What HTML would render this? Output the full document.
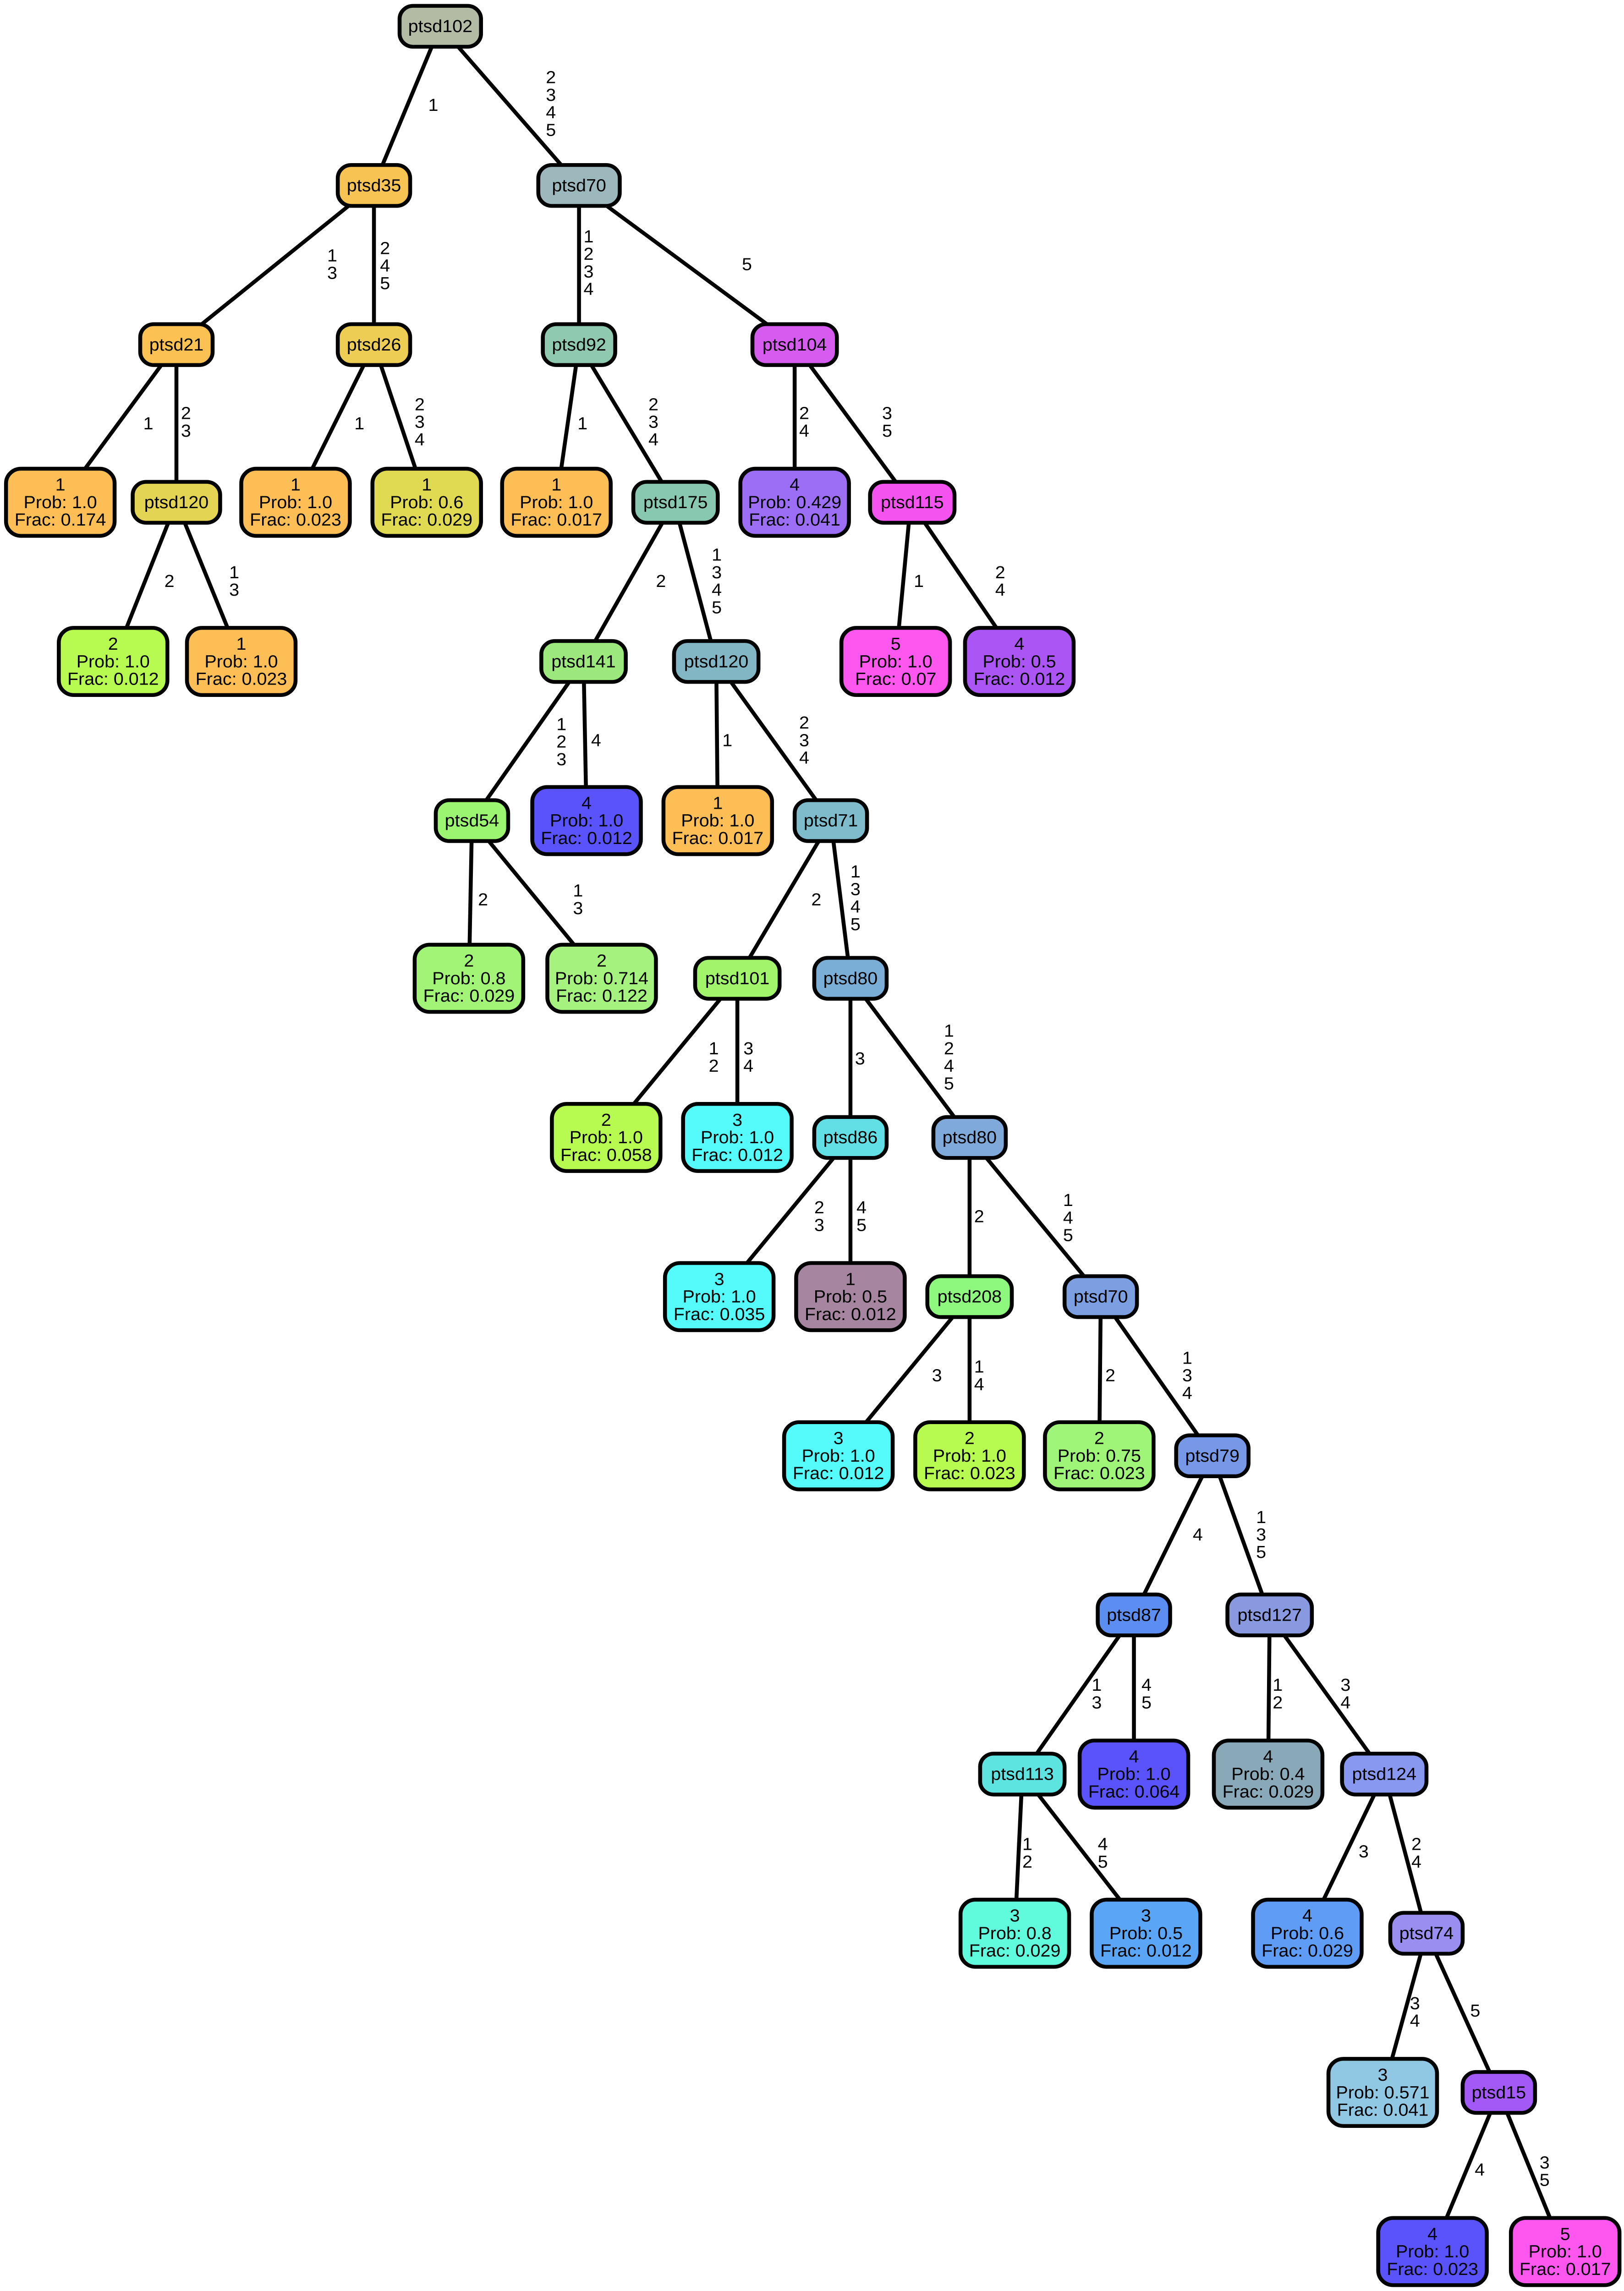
<!DOCTYPE html>
<html><head><meta charset="utf-8"><style>
html,body{margin:0;padding:0;background:#fff;overflow:hidden;width:100%;height:100%;}
svg{position:absolute;left:0;top:0;width:100vw;height:100vh;display:block;}
text{font-family:"Liberation Sans",Arial,sans-serif;font-size:12px;fill:#000;}
.n{stroke:#000;stroke-width:2.6;}
.e{stroke:#000;stroke-width:2.6;}
</style></head><body>
<svg viewBox="0 0 1077 1569" preserveAspectRatio="none" xmlns="http://www.w3.org/2000/svg">
<rect width="1077" height="1569" fill="#fff"/>
<g class="e">
<line x1="292" y1="18" x2="248" y2="127"/><line x1="292" y1="18" x2="384" y2="127"/>
<line x1="248" y1="127" x2="117" y2="236"/><line x1="248" y1="127" x2="248" y2="236"/>
<line x1="117" y1="236" x2="40" y2="344"/><line x1="117" y1="236" x2="117" y2="344"/>
<line x1="117" y1="344" x2="75" y2="453"/><line x1="117" y1="344" x2="160" y2="453"/>
<line x1="248" y1="236" x2="196" y2="344"/><line x1="248" y1="236" x2="283" y2="344"/>
<line x1="384" y1="127" x2="384" y2="236"/><line x1="384" y1="127" x2="527" y2="236"/>
<line x1="384" y1="236" x2="369" y2="344"/><line x1="384" y1="236" x2="447" y2="344"/>
<line x1="527" y1="236" x2="527" y2="344"/><line x1="527" y1="236" x2="604" y2="344"/>
<line x1="447" y1="344" x2="387" y2="453"/><line x1="447" y1="344" x2="475" y2="453"/>
<line x1="604" y1="344" x2="594" y2="453"/><line x1="604" y1="344" x2="676" y2="453"/>
<line x1="387" y1="453" x2="313" y2="562"/><line x1="387" y1="453" x2="389" y2="562"/>
<line x1="475" y1="453" x2="476" y2="562"/><line x1="475" y1="453" x2="551" y2="562"/>
<line x1="313" y1="562" x2="311" y2="670"/><line x1="313" y1="562" x2="399" y2="670"/>
<line x1="551" y1="562" x2="489" y2="670"/><line x1="551" y1="562" x2="564" y2="670"/>
<line x1="489" y1="670" x2="402" y2="779"/><line x1="489" y1="670" x2="489" y2="779"/>
<line x1="564" y1="670" x2="564" y2="779"/><line x1="564" y1="670" x2="643" y2="779"/>
<line x1="564" y1="779" x2="477" y2="888"/><line x1="564" y1="779" x2="564" y2="888"/>
<line x1="643" y1="779" x2="643" y2="888"/><line x1="643" y1="779" x2="730" y2="888"/>
<line x1="643" y1="888" x2="556" y2="997"/><line x1="643" y1="888" x2="643" y2="997"/>
<line x1="730" y1="888" x2="729" y2="997"/><line x1="730" y1="888" x2="804" y2="997"/>
<line x1="804" y1="997" x2="752" y2="1106"/><line x1="804" y1="997" x2="842" y2="1106"/>
<line x1="752" y1="1106" x2="678" y2="1215"/><line x1="752" y1="1106" x2="752" y2="1215"/>
<line x1="842" y1="1106" x2="841" y2="1215"/><line x1="842" y1="1106" x2="918" y2="1215"/>
<line x1="678" y1="1215" x2="673" y2="1324"/><line x1="678" y1="1215" x2="760" y2="1324"/>
<line x1="918" y1="1215" x2="867" y2="1324"/><line x1="918" y1="1215" x2="946" y2="1324"/>
<line x1="946" y1="1324" x2="917" y2="1433"/><line x1="946" y1="1324" x2="994" y2="1433"/>
<line x1="994" y1="1433" x2="950" y2="1542"/><line x1="994" y1="1433" x2="1037" y2="1542"/>
</g>
<g>
<text x="284" y="76">1</text>
<text x="362" y="57">2<tspan x="362" dy="12">3</tspan><tspan x="362" dy="12">4</tspan><tspan x="362" dy="12">5</tspan></text>
<text x="217" y="179">1<tspan x="217" dy="12">3</tspan></text>
<text x="252" y="174">2<tspan x="252" dy="12">4</tspan><tspan x="252" dy="12">5</tspan></text>
<text x="95" y="294">1</text>
<text x="120" y="287">2<tspan x="120" dy="12">3</tspan></text>
<text x="109" y="402">2</text>
<text x="152" y="396">1<tspan x="152" dy="12">3</tspan></text>
<text x="235" y="294">1</text>
<text x="275" y="281">2<tspan x="275" dy="12">3</tspan><tspan x="275" dy="12">4</tspan></text>
<text x="387" y="166">1<tspan x="387" dy="12">2</tspan><tspan x="387" dy="12">3</tspan><tspan x="387" dy="12">4</tspan></text>
<text x="492" y="185">5</text>
<text x="383" y="294">1</text>
<text x="430" y="281">2<tspan x="430" dy="12">3</tspan><tspan x="430" dy="12">4</tspan></text>
<text x="530" y="287">2<tspan x="530" dy="12">4</tspan></text>
<text x="585" y="287">3<tspan x="585" dy="12">5</tspan></text>
<text x="435" y="402">2</text>
<text x="472" y="384">1<tspan x="472" dy="12">3</tspan><tspan x="472" dy="12">4</tspan><tspan x="472" dy="12">5</tspan></text>
<text x="606" y="402">1</text>
<text x="660" y="396">2<tspan x="660" dy="12">4</tspan></text>
<text x="369" y="500">1<tspan x="369" dy="12">2</tspan><tspan x="369" dy="12">3</tspan></text>
<text x="392" y="511">4</text>
<text x="479" y="511">1</text>
<text x="530" y="499">2<tspan x="530" dy="12">3</tspan><tspan x="530" dy="12">4</tspan></text>
<text x="317" y="620">2</text>
<text x="380" y="614">1<tspan x="380" dy="12">3</tspan></text>
<text x="538" y="620">2</text>
<text x="564" y="601">1<tspan x="564" dy="12">3</tspan><tspan x="564" dy="12">4</tspan><tspan x="564" dy="12">5</tspan></text>
<text x="470" y="722">1<tspan x="470" dy="12">2</tspan></text>
<text x="493" y="722">3<tspan x="493" dy="12">4</tspan></text>
<text x="567" y="729">3</text>
<text x="626" y="710">1<tspan x="626" dy="12">2</tspan><tspan x="626" dy="12">4</tspan><tspan x="626" dy="12">5</tspan></text>
<text x="540" y="831">2<tspan x="540" dy="12">3</tspan></text>
<text x="568" y="831">4<tspan x="568" dy="12">5</tspan></text>
<text x="646" y="837">2</text>
<text x="705" y="826">1<tspan x="705" dy="12">4</tspan><tspan x="705" dy="12">5</tspan></text>
<text x="618" y="946">3</text>
<text x="646" y="940">1<tspan x="646" dy="12">4</tspan></text>
<text x="733" y="946">2</text>
<text x="784" y="934">1<tspan x="784" dy="12">3</tspan><tspan x="784" dy="12">4</tspan></text>
<text x="791" y="1055">4</text>
<text x="833" y="1043">1<tspan x="833" dy="12">3</tspan><tspan x="833" dy="12">5</tspan></text>
<text x="724" y="1158">1<tspan x="724" dy="12">3</tspan></text>
<text x="757" y="1158">4<tspan x="757" dy="12">5</tspan></text>
<text x="844" y="1158">1<tspan x="844" dy="12">2</tspan></text>
<text x="889" y="1158">3<tspan x="889" dy="12">4</tspan></text>
<text x="678" y="1267">1<tspan x="678" dy="12">2</tspan></text>
<text x="728" y="1267">4<tspan x="728" dy="12">5</tspan></text>
<text x="901" y="1272">3</text>
<text x="936" y="1267">2<tspan x="936" dy="12">4</tspan></text>
<text x="935" y="1376">3<tspan x="935" dy="12">4</tspan></text>
<text x="975" y="1381">5</text>
<text x="978" y="1490">4</text>
<text x="1021" y="1485">3<tspan x="1021" dy="12">5</tspan></text>
</g>
<g class="n">
<rect x="265" y="4" width="54" height="28" rx="9" fill="#b3bba4"/>
<rect x="224" y="113" width="48" height="28" rx="9" fill="#f7c352"/>
<rect x="357" y="113" width="54" height="28" rx="9" fill="#9db8bc"/>
<rect x="93" y="222" width="48" height="28" rx="9" fill="#fbc153"/>
<rect x="224" y="222" width="48" height="28" rx="9" fill="#edcd53"/>
<rect x="360" y="222" width="48" height="28" rx="9" fill="#8fc9b0"/>
<rect x="499" y="222" width="56" height="28" rx="9" fill="#d65cf0"/>
<rect x="88" y="330" width="58" height="28" rx="9" fill="#e3d553"/>
<rect x="420" y="330" width="56" height="28" rx="9" fill="#88c8b0"/>
<rect x="577" y="330" width="56" height="28" rx="9" fill="#f553f0"/>
<rect x="359" y="439" width="56" height="28" rx="9" fill="#9de87c"/>
<rect x="447" y="439" width="56" height="28" rx="9" fill="#83b6c4"/>
<rect x="289" y="548" width="48" height="28" rx="9" fill="#9cf570"/>
<rect x="527" y="548" width="48" height="28" rx="9" fill="#7fbccb"/>
<rect x="461" y="656" width="56" height="28" rx="9" fill="#a2f56a"/>
<rect x="540" y="656" width="48" height="28" rx="9" fill="#7aaed6"/>
<rect x="540" y="765" width="48" height="28" rx="9" fill="#62dfe4"/>
<rect x="619" y="765" width="48" height="28" rx="9" fill="#7fa9d9"/>
<rect x="615" y="874" width="56" height="28" rx="9" fill="#8ef77e"/>
<rect x="706" y="874" width="48" height="28" rx="9" fill="#7b9fe0"/>
<rect x="780" y="983" width="48" height="28" rx="9" fill="#7698e6"/>
<rect x="728" y="1092" width="48" height="28" rx="9" fill="#5b8ef0"/>
<rect x="814" y="1092" width="56" height="28" rx="9" fill="#8899e0"/>
<rect x="650" y="1201" width="56" height="28" rx="9" fill="#5de3e0"/>
<rect x="890" y="1201" width="56" height="28" rx="9" fill="#8898f0"/>
<rect x="922" y="1310" width="48" height="28" rx="9" fill="#9a8ef0"/>
<rect x="970" y="1419" width="48" height="28" rx="9" fill="#a259f5"/>
</g>
<g text-anchor="middle">
<text x="292" y="22">ptsd102</text><text x="248" y="131">ptsd35</text><text x="384" y="131">ptsd70</text>
<text x="117" y="240">ptsd21</text><text x="248" y="240">ptsd26</text><text x="384" y="240">ptsd92</text>
<text x="527" y="240">ptsd104</text><text x="117" y="348">ptsd120</text><text x="448" y="348">ptsd175</text>
<text x="605" y="348">ptsd115</text><text x="387" y="457">ptsd141</text><text x="475" y="457">ptsd120</text>
<text x="313" y="566">ptsd54</text><text x="551" y="566">ptsd71</text><text x="489" y="674">ptsd101</text>
<text x="564" y="674">ptsd80</text><text x="564" y="783">ptsd86</text><text x="643" y="783">ptsd80</text>
<text x="643" y="892">ptsd208</text><text x="730" y="892">ptsd70</text><text x="804" y="1001">ptsd79</text>
<text x="752" y="1110">ptsd87</text><text x="842" y="1110">ptsd127</text><text x="678" y="1219">ptsd113</text>
<text x="918" y="1219">ptsd124</text><text x="946" y="1328">ptsd74</text><text x="994" y="1437">ptsd15</text>
</g>
<g class="n">
<rect x="4" y="321" width="72" height="46" rx="10" fill="#fdbf55"/>
<rect x="39" y="430" width="72" height="46" rx="10" fill="#b8fb50"/>
<rect x="124" y="430" width="72" height="46" rx="10" fill="#fdbf55"/>
<rect x="160" y="321" width="72" height="46" rx="10" fill="#fdbf55"/>
<rect x="247" y="321" width="72" height="46" rx="10" fill="#e0da52"/>
<rect x="333" y="321" width="72" height="46" rx="10" fill="#fdbf55"/>
<rect x="491" y="321" width="72" height="46" rx="10" fill="#9b6ef5"/>
<rect x="558" y="430" width="72" height="46" rx="10" fill="#fd57f0"/>
<rect x="640" y="430" width="72" height="46" rx="10" fill="#ac55f5"/>
<rect x="353" y="539" width="72" height="46" rx="10" fill="#5a53fb"/>
<rect x="440" y="539" width="72" height="46" rx="10" fill="#fdbf55"/>
<rect x="275" y="647" width="72" height="46" rx="10" fill="#a2f476"/>
<rect x="363" y="647" width="72" height="46" rx="10" fill="#a5f27e"/>
<rect x="366" y="756" width="72" height="46" rx="10" fill="#b8fb50"/>
<rect x="453" y="756" width="72" height="46" rx="10" fill="#55fbfb"/>
<rect x="441" y="865" width="72" height="46" rx="10" fill="#55fbfb"/>
<rect x="528" y="865" width="72" height="46" rx="10" fill="#a5859f"/>
<rect x="520" y="974" width="72" height="46" rx="10" fill="#55fbfb"/>
<rect x="607" y="974" width="72" height="46" rx="10" fill="#b8fb50"/>
<rect x="693" y="974" width="72" height="46" rx="10" fill="#9ef578"/>
<rect x="716" y="1192" width="72" height="46" rx="10" fill="#5a53fb"/>
<rect x="637" y="1301" width="72" height="46" rx="10" fill="#60fbdc"/>
<rect x="724" y="1301" width="72" height="46" rx="10" fill="#5aa5f5"/>
<rect x="805" y="1192" width="72" height="46" rx="10" fill="#8aa9b8"/>
<rect x="831" y="1301" width="72" height="46" rx="10" fill="#5f9cf5"/>
<rect x="881" y="1410" width="72" height="46" rx="10" fill="#90c8e4"/>
<rect x="914" y="1519" width="72" height="46" rx="10" fill="#5a53fb"/>
<rect x="1002" y="1519" width="72" height="46" rx="10" fill="#fd57f0"/>
</g>
<g text-anchor="middle">
<text x="40" y="336">1<tspan x="40" dy="12">Prob: 1.0</tspan><tspan x="40" dy="12">Frac: 0.174</tspan></text>
<text x="75" y="445">2<tspan x="75" dy="12">Prob: 1.0</tspan><tspan x="75" dy="12">Frac: 0.012</tspan></text>
<text x="160" y="445">1<tspan x="160" dy="12">Prob: 1.0</tspan><tspan x="160" dy="12">Frac: 0.023</tspan></text>
<text x="196" y="336">1<tspan x="196" dy="12">Prob: 1.0</tspan><tspan x="196" dy="12">Frac: 0.023</tspan></text>
<text x="283" y="336">1<tspan x="283" dy="12">Prob: 0.6</tspan><tspan x="283" dy="12">Frac: 0.029</tspan></text>
<text x="369" y="336">1<tspan x="369" dy="12">Prob: 1.0</tspan><tspan x="369" dy="12">Frac: 0.017</tspan></text>
<text x="527" y="336">4<tspan x="527" dy="12">Prob: 0.429</tspan><tspan x="527" dy="12">Frac: 0.041</tspan></text>
<text x="594" y="445">5<tspan x="594" dy="12">Prob: 1.0</tspan><tspan x="594" dy="12">Frac: 0.07</tspan></text>
<text x="676" y="445">4<tspan x="676" dy="12">Prob: 0.5</tspan><tspan x="676" dy="12">Frac: 0.012</tspan></text>
<text x="389" y="554">4<tspan x="389" dy="12">Prob: 1.0</tspan><tspan x="389" dy="12">Frac: 0.012</tspan></text>
<text x="476" y="554">1<tspan x="476" dy="12">Prob: 1.0</tspan><tspan x="476" dy="12">Frac: 0.017</tspan></text>
<text x="311" y="662">2<tspan x="311" dy="12">Prob: 0.8</tspan><tspan x="311" dy="12">Frac: 0.029</tspan></text>
<text x="399" y="662">2<tspan x="399" dy="12">Prob: 0.714</tspan><tspan x="399" dy="12">Frac: 0.122</tspan></text>
<text x="402" y="771">2<tspan x="402" dy="12">Prob: 1.0</tspan><tspan x="402" dy="12">Frac: 0.058</tspan></text>
<text x="489" y="771">3<tspan x="489" dy="12">Prob: 1.0</tspan><tspan x="489" dy="12">Frac: 0.012</tspan></text>
<text x="477" y="880">3<tspan x="477" dy="12">Prob: 1.0</tspan><tspan x="477" dy="12">Frac: 0.035</tspan></text>
<text x="564" y="880">1<tspan x="564" dy="12">Prob: 0.5</tspan><tspan x="564" dy="12">Frac: 0.012</tspan></text>
<text x="556" y="989">3<tspan x="556" dy="12">Prob: 1.0</tspan><tspan x="556" dy="12">Frac: 0.012</tspan></text>
<text x="643" y="989">2<tspan x="643" dy="12">Prob: 1.0</tspan><tspan x="643" dy="12">Frac: 0.023</tspan></text>
<text x="729" y="989">2<tspan x="729" dy="12">Prob: 0.75</tspan><tspan x="729" dy="12">Frac: 0.023</tspan></text>
<text x="752" y="1207">4<tspan x="752" dy="12">Prob: 1.0</tspan><tspan x="752" dy="12">Frac: 0.064</tspan></text>
<text x="673" y="1316">3<tspan x="673" dy="12">Prob: 0.8</tspan><tspan x="673" dy="12">Frac: 0.029</tspan></text>
<text x="760" y="1316">3<tspan x="760" dy="12">Prob: 0.5</tspan><tspan x="760" dy="12">Frac: 0.012</tspan></text>
<text x="841" y="1207">4<tspan x="841" dy="12">Prob: 0.4</tspan><tspan x="841" dy="12">Frac: 0.029</tspan></text>
<text x="867" y="1316">4<tspan x="867" dy="12">Prob: 0.6</tspan><tspan x="867" dy="12">Frac: 0.029</tspan></text>
<text x="917" y="1425">3<tspan x="917" dy="12">Prob: 0.571</tspan><tspan x="917" dy="12">Frac: 0.041</tspan></text>
<text x="950" y="1534">4<tspan x="950" dy="12">Prob: 1.0</tspan><tspan x="950" dy="12">Frac: 0.023</tspan></text>
<text x="1038" y="1534">5<tspan x="1038" dy="12">Prob: 1.0</tspan><tspan x="1038" dy="12">Frac: 0.017</tspan></text>
</g>
</svg>
</body></html>
